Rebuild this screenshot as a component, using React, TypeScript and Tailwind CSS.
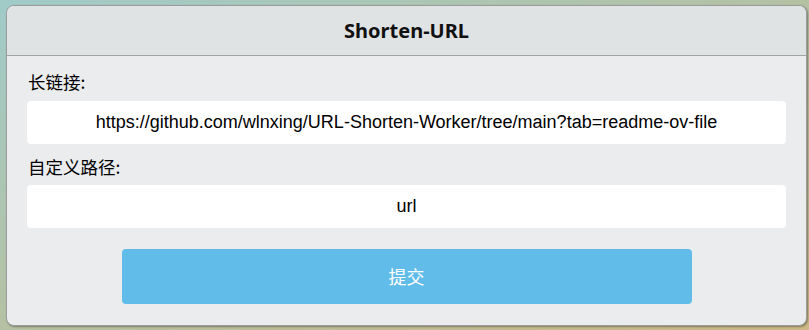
export default function App() {
  return (
    <div className="h-[330px] w-[809px] bg-[linear-gradient(to_bottom_right,#a0cbc8_0%,#b5c1a3_50%,#ccb987_100%)] pl-[6px] pt-[5px]">
      <div className="w-[801px] overflow-hidden rounded-lg border border-[#9c9c9c] bg-[#ebecee] shadow-[1px_1px_2px_rgba(0,0,0,0.35)]">
        <div className="flex h-[50px] items-center justify-center border-b border-[#a3a3a3] bg-[#e0e3e4]">
          <h1 className="font-['Noto_Sans','Noto_Sans_CJK_SC',sans-serif] text-[20px] font-bold text-[#111]">
            Shorten-URL
          </h1>
        </div>
        <form className="flex flex-col px-5 pt-[14px] pb-[21px] font-['Noto_Sans_CJK_SC','Noto_Sans',sans-serif]">
          <label className="pl-px text-[17.5px] leading-6 text-black">长链接:</label>
          <input
            readOnly
            value="https://github.com/wlnxing/URL-Shorten-Worker/tree/main?tab=readme-ov-file"
            className="mt-[7px] h-[43px] w-full rounded bg-white text-center font-['Liberation_Sans',Arial,sans-serif] text-[18px] text-black outline-none"
          />
          <label className="mt-[11px] pl-px text-[17.5px] leading-6 text-black">自定义路径:</label>
          <input
            readOnly
            value="url"
            className="mt-[6px] h-[43px] w-full rounded bg-white text-center font-['Liberation_Sans',Arial,sans-serif] text-[18px] text-black outline-none"
          />
          <button
            type="button"
            className="mx-auto mt-[21px] h-[55px] w-[570px] rounded bg-[#62bce9] text-[18px] text-white"
          >
            提交
          </button>
        </form>
      </div>
    </div>
  );
}
